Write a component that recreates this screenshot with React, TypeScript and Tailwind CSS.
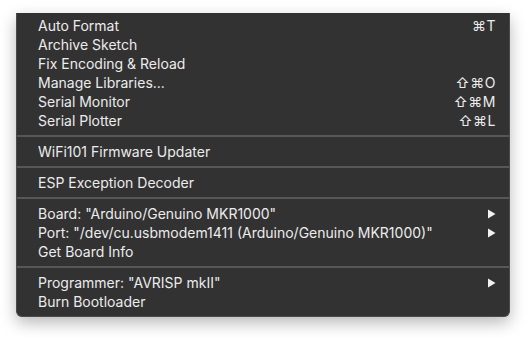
import React from 'react';

type Item = { label: string; shortcut?: string; submenu?: boolean };

const groups: Item[][] = [
  [
    { label: 'Auto Format', shortcut: '⌘T' },
    { label: 'Archive Sketch' },
    { label: 'Fix Encoding & Reload' },
    { label: 'Manage Libraries...', shortcut: '⇧⌘O' },
    { label: 'Serial Monitor', shortcut: '⇧⌘M' },
    { label: 'Serial Plotter', shortcut: '⇧⌘L' },
  ],
  [{ label: 'WiFi101 Firmware Updater' }],
  [{ label: 'ESP Exception Decoder' }],
  [
    { label: 'Board: "Arduino/Genuino MKR1000"', submenu: true },
    { label: 'Port: "/dev/cu.usbmodem1411 (Arduino/Genuino MKR1000)"', submenu: true },
    { label: 'Get Board Info' },
  ],
  [
    { label: 'Programmer: "AVRISP mkII"', submenu: true },
    { label: 'Burn Bootloader' },
  ],
];

const Arrow = () => (
  <svg width="9" height="10" viewBox="0 0 9 10">
    <path d="M1 0.5 L8.5 5 L1 9.5 Z" fill="#f2f2f2" />
  </svg>
);

const MenuRow = ({ item }: { item: Item }) => (
  <div className="flex h-[19px] items-center justify-between pl-[21px] pr-[13px]">
    <span>{item.label}</span>
    {item.shortcut && <span className="tracking-[0.5px]">{item.shortcut}</span>}
    {item.submenu && <Arrow />}
  </div>
);

const App = () => {
  return (
    <div className="h-[337px] w-[527px] bg-white pl-[16px] pt-[13px]">
      <div
        className="w-[494px] rounded-b-[6px] border-x border-b border-[#4b4b4b] bg-[#323232] pt-[3px] pb-[5px] text-[14px] leading-none text-[#ececec] shadow-[0_6px_16px_rgba(0,0,0,0.28)]"
        style={{ fontFamily: 'Inter, "Liberation Sans", sans-serif' }}
      >
        {groups.map((group, gi) => (
          <React.Fragment key={gi}>
            {gi > 0 && (
              <div className="flex h-[12px] items-center">
                <div className="h-[2px] w-full bg-[#575757]" />
              </div>
            )}
            {group.map((item, i) => (
              <MenuRow key={i} item={item} />
            ))}
          </React.Fragment>
        ))}
      </div>
    </div>
  );
};

export default App;
